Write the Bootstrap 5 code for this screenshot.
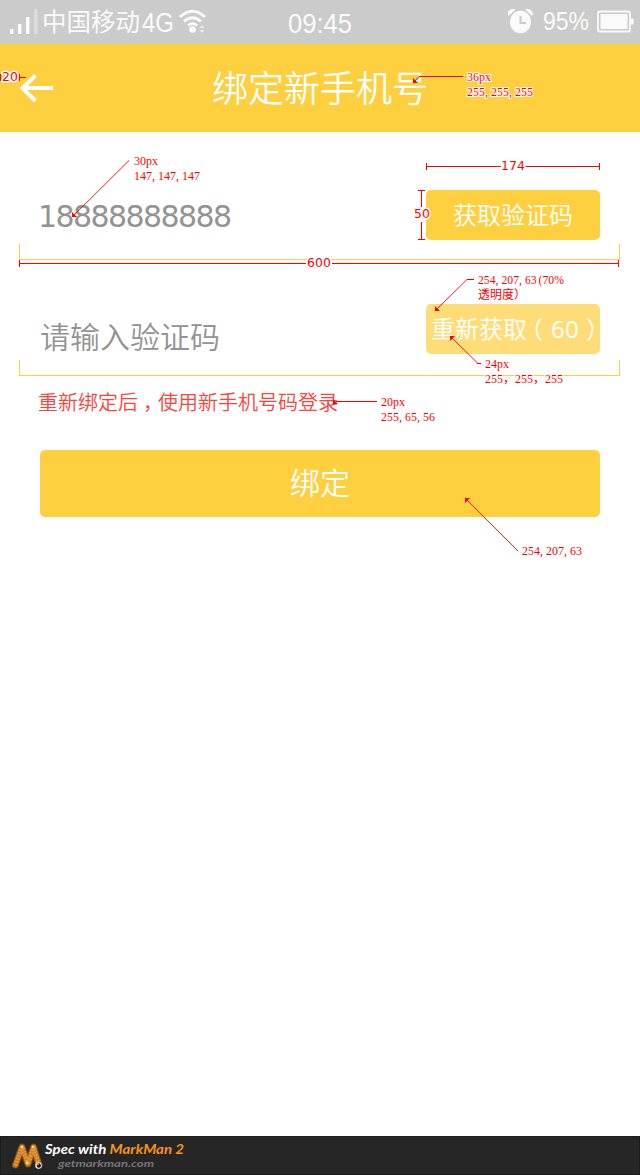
<!DOCTYPE html>
<html lang="zh-CN">
<head>
<meta charset="utf-8">
<meta name="viewport" content="width=device-width, initial-scale=1">
<title>绑定新手机号</title>
<link href="https://cdn.jsdelivr.net/npm/bootstrap@5.3.0/dist/css/bootstrap.min.css" rel="stylesheet">
<style>
body{font-family:"Noto Sans CJK SC",sans-serif;font-weight:350;width:640px;height:1175px;overflow:hidden;background:#fff}
.screen{height:1175px}
.statusbar{height:44px;background:#cbcbcb}
.titlebar{height:88px;background:#fecf3f}
.titlebar h1{font-size:36px;line-height:84px;font-weight:350}
.form-area{padding-top:58px}
.field-row{height:50px;padding-left:40px;padding-right:40px}
.field-row.second{margin-top:44px}
.field-text{font-size:30px;line-height:50px;color:#939393}
.field-text.prompt{line-height:47px}
.phone-text{font-family:"DejaVu Sans",sans-serif;font-size:30px;letter-spacing:-1.58px;margin-left:-2px;font-weight:400;line-height:54px}
.code-btn{width:174px;height:50px;border-radius:5px;border:0;padding:0 0 2px;background:#fecf3f;color:#fff;font-size:24px;line-height:48px;font-weight:350}
.code-btn.waiting{background:#fedd79;white-space:nowrap;text-align:left;padding-left:5px}
.half-mark{font-feature-settings:"halt"}
.paren-l{margin-left:4px;margin-right:8px}
.paren-r{margin-left:7px}
.comma{margin:0 5px}
.sec{font-family:"Open Sans",sans-serif;font-weight:400;letter-spacing:.3px}
.field-line{height:16px;margin:4px 20px 0 19px;border:1px solid #fecf3f;border-top:0}
.field-line.second{margin-top:6px}
.hint{font-size:20px;line-height:30px;color:#ff4138;padding-left:38px;margin-top:11px}
.bind-btn{height:67px;margin:33px 40px 0;border:0;border-radius:5px;background:#fecf3f;color:#fff;font-size:30px;line-height:60px;padding:0 0 5px;font-weight:350}
.brandbar{height:39px;background:#262626;border:1px solid #1c1c1c;padding-left:10px}
.brand-text{font-family:Lato,sans-serif;font-style:italic;font-weight:700}
.spec-layer text{font-family:"Liberation Serif","Noto Sans CJK SC",serif;font-size:12px;font-weight:400;fill:#f00;stroke:#fff;stroke-width:2px;stroke-linejoin:round;paint-order:stroke}
.spec-layer .dim{font-family:"DejaVu Sans",sans-serif;font-size:12.5px;text-anchor:middle;stroke-width:3px}
</style>
</head>
<body>
<div class="screen d-flex flex-column position-relative">
  <div class="statusbar flex-shrink-0">
    <svg class="d-block" width="640" height="44" fill="#fafafa">
      <rect x="10" y="29" width="3.5" height="5"/><rect x="18" y="24" width="3.5" height="10"/><rect x="26" y="17" width="3.5" height="17"/><rect x="34" y="9" width="3.5" height="25" fill="#dcdcdc"/>
      <text x="42" y="31" font-size="25" font-weight="400" textLength="98" lengthAdjust="spacingAndGlyphs" font-family="Noto Sans CJK SC">中国移动</text>
      <text x="142" y="32" font-size="27" textLength="32" lengthAdjust="spacingAndGlyphs" font-family="Liberation Sans">4G</text>
      <g fill="none" stroke="#fafafa" stroke-width="2.7"><path d="M180 17Q192.500 5.500 205 17M184 21.500Q192.500 14 201 21.500M188 25.500Q192.500 21.800 197 25.500"/></g>
      <circle cx="192.500" cy="29.500" r="3.300"/>
      <path d="M199.500 28l2.500-3 2.500 3zM199.500 30l2.500 3 2.500-3z" fill="#ececec"/>
      <text x="288" y="33" font-size="28" textLength="64" lengthAdjust="spacingAndGlyphs" font-family="Liberation Sans">09:45</text>
      <ellipse cx="520.500" cy="22" rx="10.500" ry="11.300"/>
      <path d="M508.500 15.500Q507 9 515 9.500ZM532 15.500Q533.500 9 526 9.500Z" stroke="#fafafa"/>
      <path d="M520.500 16V23H526" fill="none" stroke="#cbcbcb" stroke-width="2"/>
      <text x="543" y="30" font-size="25" textLength="46" lengthAdjust="spacingAndGlyphs" font-family="Liberation Sans">95%</text>
      <rect x="598" y="11.500" width="32" height="20" rx="2" fill="none" stroke="#fafafa" stroke-width="1.800"/><rect x="600.500" y="14" width="27" height="15"/><path d="M631 18.500h2.500v6H631z"/>
    </svg>
  </div>

  <header class="titlebar flex-shrink-0 d-flex justify-content-center position-relative">
    <svg class="position-absolute start-0 top-0" width="60" height="88" fill="none" stroke="#fff" stroke-width="4"><path d="M53 44H23M35.500 31.500L22.500 44.300L35.500 57"/></svg>
    <h1 class="text-white m-0">绑定新手机号</h1>
  </header>

  <main class="form-area d-flex flex-column flex-grow-1">
    <div class="field-row d-flex justify-content-between">
      <span class="field-text phone-text">18888888888</span>
      <button class="btn code-btn">获取验证码</button>
    </div>
    <div class="field-line"></div>
    <div class="field-row second d-flex justify-content-between">
      <span class="field-text prompt pt-2">请输入验证码</span>
      <button class="btn code-btn waiting">重新获取<span class="half-mark paren-l">（</span><span class="sec">60</span><span class="half-mark paren-r">）</span></button>
    </div>
    <div class="field-line second"></div>
    <p class="hint mb-0">重新绑定后<span class="half-mark comma">，</span>使用新手机号码登录</p>
    <button class="btn bind-btn">绑定</button>
  </main>

  <footer class="brandbar flex-shrink-0">
    <svg class="d-block" width="200" height="37">
      <g fill="none" stroke-linejoin="round">
        <path d="M4.500 28L11 10L17 27L22.500 10L28 28" stroke="#8a4708" stroke-width="7" stroke-linecap="round"/>
        <path d="M4.500 28L11 10L17 27L22.500 10L28 28" stroke="#c9822b" stroke-width="5" stroke-linecap="round"/>
        <path d="M4.500 28L11 10L17 27L22.500 10L28 28" stroke="#e3a24a" stroke-width="4" stroke-dasharray="1 2"/>
      </g>
      <circle cx="11" cy="10" r="1.200" fill="#ffe39a"/><circle cx="22" cy="10" r="1.200" fill="#ffe39a"/><circle cx="16" cy="26" r="1.200" fill="#ffe39a"/>
      <circle cx="27.500" cy="28.500" r="3.200" fill="#fff"/><circle cx="27.800" cy="28.500" r="2.200" fill="#111"/><circle cx="27" cy="27.700" r=".7" fill="#fff"/>
      <text class="brand-text" x="34" y="17" font-size="13.5" fill="#fff" textLength="139" lengthAdjust="spacingAndGlyphs">Spec with <tspan fill="#f7931e">MarkMan 2</tspan></text>
      <text class="brand-text" x="47" y="29.500" font-size="10" fill="#777" textLength="96" lengthAdjust="spacingAndGlyphs">getmarkman.com</text>
    </svg>
  </footer>

  <!-- measurement and colour notes over the screen -->
  <svg class="spec-layer position-absolute top-0 start-0 pe-none" width="640" height="1175">
    <g fill="none" stroke="#f00" shape-rendering="crispEdges">
      <path d="M.5 74v7M19.500 74v7M19 77.500h7"/>
      <path d="M419 76.500h44"/>
      <path d="M426.500 163v7M599.500 163v7M426 166.500h75M525 166.500h75"/>
      <path d="M418 190.500h7M418 239.500h7M421.500 190v17M421.500 222v18"/>
      <path d="M19.500 260v7M618.500 260v7M19 263.500h287M332 263.500h287"/>
      <path d="M467 279.500h7M477 363.500h4M336 401.500h41"/>
    </g>
    <g fill="none" stroke="#f00" stroke-width=".9">
      <path d="M129 160.500L74 215M419 76.500L415 81M467 279.500L437 309M478 363.500L452 338M518 551L467 500"/>
    </g>
    <g fill="#f00">
      <path d="M72 212v5h5zM413 78v5h5zM435 306v5h5zM450 341v-5h5zM333 399v6l5-1zM465 503v-5h5z"/>
    </g>
    <text class="dim" x="10" y="81">20</text>
    <text class="dim" x="513" y="170">174</text>
    <text class="dim" x="422" y="218">50</text>
    <text class="dim" x="319" y="267">600</text>
    <text x="467" y="81">36px</text>
    <text x="467" y="96" dx="0 0 0 0 3 0 0 0 3">255,255,255</text>
    <text x="134" y="165">30px</text>
    <text x="134" y="180" dx="0 0 0 0 3 0 0 0 3">147,147,147</text>
    <text x="478" y="284" dx="0 0 0 0 3 0 0 0 3 0 2" textLength="86" lengthAdjust="spacingAndGlyphs">254,207,63(70%</text>
    <text x="478" y="299">透明度）</text>
    <text x="485" y="368">24px</text>
    <text x="485" y="383">255，255，255</text>
    <text x="381" y="406">20px</text>
    <text x="381" y="421" dx="0 0 0 0 3 0 0 3">255,65,56</text>
    <text x="522" y="555" dx="0 0 0 0 3 0 0 0 3">254,207,63</text>
  </svg>
</div>
<script src="https://cdn.jsdelivr.net/npm/bootstrap@5.3.0/dist/js/bootstrap.bundle.min.js"></script>
</body>
</html>
